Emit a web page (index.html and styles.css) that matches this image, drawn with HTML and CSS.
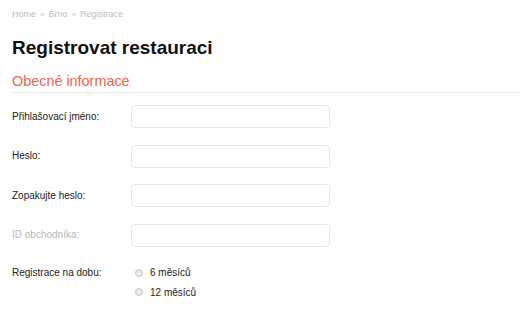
FILE: index.html
```html
<!DOCTYPE html>
<html lang="cs">
<head>
<meta charset="utf-8">
<title>Registrovat restauraci</title>
<link rel="stylesheet" href="styles.css">
</head>
<body>
<div class="page">
  <nav class="crumbs">
    <a href="#">Home</a><span class="sep">»</span><a href="#">Brno</a><span class="sep">»</span><span>Registrace</span>
  </nav>
  <h1 class="title">Registrovat restauraci</h1>
  <h2 class="section">Obecné informace</h2>
  <form class="form">
    <div class="row">
      <label class="label" for="login">Přihlašovací jméno:</label>
      <input class="field" id="login" type="text">
    </div>
    <div class="row">
      <label class="label" for="pass">Heslo:</label>
      <input class="field" id="pass" type="password">
    </div>
    <div class="row">
      <label class="label" for="pass2">Zopakujte heslo:</label>
      <input class="field" id="pass2" type="password">
    </div>
    <div class="row">
      <label class="label muted" for="merchant">ID obchodníka:</label>
      <input class="field" id="merchant" type="text">
    </div>
    <div class="row row-top">
      <span class="label radio-label">Registrace na dobu:</span>
      <div class="choices">
        <label class="choice"><input class="radio" type="radio" name="period"><span>6 měsíců</span></label>
        <label class="choice"><input class="radio" type="radio" name="period"><span>12 měsíců</span></label>
      </div>
    </div>
  </form>
</div>
</body>
</html>
```

FILE: styles.css
```css
html, body {
  margin: 0;
  padding: 0;
  background: #ffffff;
}
body {
  font-family: "Liberation Sans", Arial, sans-serif;
  color: #222;
}
.page {
  padding: 8px 0 0 12px;
}
.crumbs {
  font-size: 9px;
  line-height: 12px;
  color: #bdbdbd;
}
.crumbs a {
  color: #bdbdbd;
  text-decoration: none;
}
.crumbs .sep {
  display: inline-block;
  margin: 0 4px;
  font-size: 8px;
  color: #c8c8c8;
}
.title {
  margin: 16px 0 0;
  font-size: 19px;
  line-height: 22px;
  font-weight: bold;
  color: #111;
}
.section {
  margin: 13px 0 0;
  padding-bottom: 2px;
  font-size: 14.4px;
  line-height: 18px;
  font-weight: normal;
  color: #ef6450;
  border-bottom: 1px solid #e8e8e8;
}
.form {
  margin-top: 12px;
}
.row {
  display: flex;
  align-items: center;
  margin-bottom: 16.5px;
}
.row-top {
  align-items: flex-start;
}
.label {
  width: 119px;
  flex: none;
  font-size: 10px;
  line-height: 14px;
  color: #222;
}
.label.muted {
  color: #b9b9b9;
}
.radio-label {
  line-height: 19.5px;
}
.field {
  box-sizing: border-box;
  width: 199px;
  height: 23px;
  margin: 0;
  padding: 0 6px;
  border: 1px solid #e6e6e6;
  border-radius: 4px;
  background: #fff;
  font: inherit;
  font-size: 10px;
  outline: none;
}
.choices {
  display: flex;
  flex-direction: column;
}
.choice {
  display: flex;
  align-items: center;
  height: 19.5px;
  font-size: 10px;
  color: #222;
}
.radio {
  -webkit-appearance: none;
  appearance: none;
  box-sizing: border-box;
  width: 8px;
  height: 8px;
  margin: 0 7px 0 4px;
  border: 1px solid #c9c9c9;
  border-radius: 50%;
  background: radial-gradient(circle at 50% 60%, #f4f4f4 0%, #dcdcdc 100%);
}
```
